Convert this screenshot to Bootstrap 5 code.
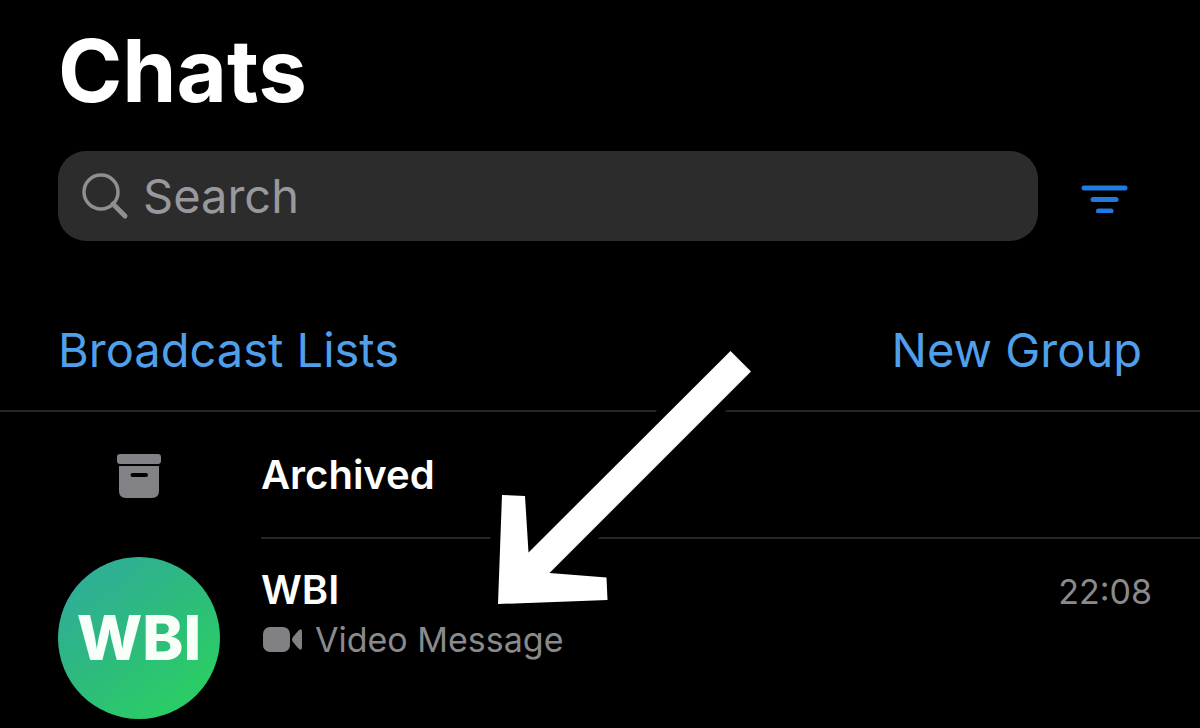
<!DOCTYPE html>
<html lang="en">
<head>
<meta charset="utf-8">
<meta name="viewport" content="width=device-width, initial-scale=1">
<title>Chats</title>
<link href="https://cdn.jsdelivr.net/npm/bootstrap@5.3.0/dist/css/bootstrap.min.css" rel="stylesheet">
<style>
  body { background: #000; color: #fff; font-family: Inter, "Liberation Sans", sans-serif; }
  .page-title { font-size: 87px; line-height: 104px; font-weight: 700; padding: 19px 58px 0; }
  .search-row { padding: 28px 72px 0 58px; gap: 43px; }
  .search-box { height: 90px; border-radius: 28px; background: #2c2c2d; padding: 0 23px; gap: 14px; }
  .search-box .form-control, .search-box .form-control:focus {
    background: transparent; border: 0; box-shadow: none; color: #fff; padding: 0; font-size: 47px; line-height: 60px;
  }
  .search-box .form-control::placeholder { color: #98989d; opacity: 1; }
  .actions { padding: 79px 58px 30px; border-bottom: 2px solid #262628; }
  .actions a { color: #4f9fea; font-size: 47px; line-height: 60px; }
  .chat-lead { width: 162px; }
  .chat-row { padding-left: 58px; gap: 41px; }
  .chat-name { font-size: 40px; line-height: 48px; font-weight: 600; }
  .archived-body { height: 127px; border-bottom: 2px solid #262628; }
  .chat-body { padding: 27px 48px 0 0; }
  .muted-text { color: #8a8a8c; font-size: 34px; line-height: 48px; }
  .avatar-badge { height: 162px; margin-top: 18px; border-radius: 50%; color: #f6fff8; font-size: 62px; line-height: 62px; font-weight: 800;
    background: linear-gradient(140deg, #2fae98 12%, #2db97f 45%, #2bcb68 80%); }
  .pointer-arrow { left: 486px; top: 339px; pointer-events: none; }
</style>
</head>
<body>
<main class="position-relative">
  <h1 class="page-title m-0">Chats</h1>

  <form class="search-row d-flex align-items-center" role="search">
    <label class="search-box d-flex align-items-center flex-grow-1">
      <svg class="flex-shrink-0" width="48" height="48" viewBox="0 0 48 48" fill="none" stroke="#8e8e93" aria-hidden="true">
        <circle cx="20" cy="20" r="17" stroke-width="3.500"/>
        <path d="M32 32 44 44" stroke-width="5" stroke-linecap="round"/>
      </svg>
      <input type="search" class="form-control" placeholder="Search" aria-label="Search">
    </label>
    <button type="button" class="btn p-0 border-0 d-flex" aria-label="Filter chats">
      <svg width="47" height="34" viewBox="0 0 47 34" stroke="#2279df" stroke-width="5" stroke-linecap="round" aria-hidden="true">
        <path d="M3 9H44M12 20.500H35M17.500 32H30"/>
      </svg>
    </button>
  </form>

  <nav class="actions d-flex justify-content-between">
    <a href="#" class="text-decoration-none">Broadcast Lists</a>
    <a href="#" class="text-decoration-none">New Group</a>
  </nav>

  <ul class="list-unstyled m-0">
    <li class="chat-row d-flex">
      <div class="chat-lead d-flex align-items-center justify-content-center flex-shrink-0">
        <svg width="44" height="44" viewBox="0 0 44 44" fill="#818186" aria-hidden="true">
          <rect width="44" height="10" rx="3"/>
          <path fill-rule="evenodd" d="M2 12H42V37Q42 44 35 44H9Q2 44 2 37ZM15.500 19a2 2 0 0 0 0 4H29a2 2 0 0 0 0-4Z"/>
        </svg>
      </div>
      <div class="archived-body flex-grow-1 d-flex align-items-center">
        <span class="chat-name">Archived</span>
      </div>
    </li>
    <li class="chat-row d-flex">
      <div class="chat-lead avatar-badge d-flex align-items-center justify-content-center flex-shrink-0">WBI</div>
      <div class="chat-body flex-grow-1">
        <div class="d-flex justify-content-between align-items-baseline">
          <span class="chat-name">WBI</span>
          <time class="muted-text" datetime="22:08">22:08</time>
        </div>
        <div class="muted-text d-flex align-items-center gap-2">
          <svg class="me-1" width="42" height="26" viewBox="0 0 42 26" fill="#818184" aria-hidden="true">
            <rect x="2" width="27" height="25" rx="7"/>
            <path d="M32 10 37 4Q41 0 41 5V20Q41 25 37 21L32 15Q30 12.500 32 10Z"/>
          </svg>
          <span>Video Message</span>
        </div>
      </div>
    </li>
  </ul>

  <svg class="pointer-arrow position-absolute" width="277" height="277" viewBox="486 339 277 277" aria-hidden="true">
    <path d="M730.500 351 751 371.500 549.500 573 606.500 577.500 607.500 600 498 604 502 495 525 496 528.500 552.500Z" fill="#fff" stroke="#000" stroke-width="20" paint-order="stroke"/>
  </svg>
</main>
<script src="https://cdn.jsdelivr.net/npm/bootstrap@5.3.0/dist/js/bootstrap.bundle.min.js"></script>
</body>
</html>
